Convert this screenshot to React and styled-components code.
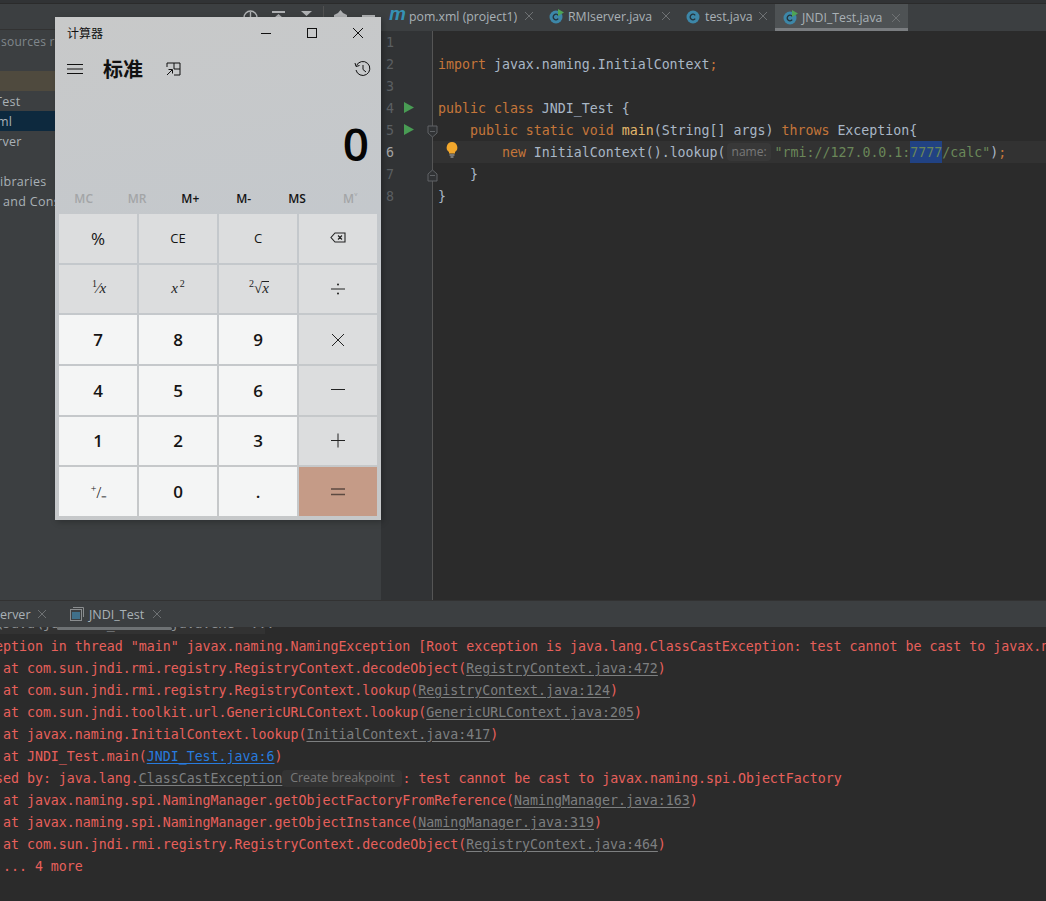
import React from 'react';
import styled, { createGlobalStyle } from "styled-components";

const GlobalStyle = createGlobalStyle`
    html, body {
        margin: 0;
        padding: 0;
        background: #2b2b2b;
    }
`

const UI = `"Open Sans", "Noto Sans", sans-serif`
const MONO = `"DejaVu Sans Mono", "Liberation Mono", monospace`
const CJK = `"Noto Sans CJK SC", "Noto Sans", sans-serif`

const Page = styled.div`
    position: relative;
    width: 1046px;
    height: 901px;
    overflow: hidden;
    display: flex;
    flex-direction: column;
    background: #2b2b2b;
`

const TopStrip = styled.div`
    height: 3px;
    flex: none;
    background: #313335;
    border-bottom: 1px solid #2b2b2b;
`

const Upper = styled.div`
    height: 596px;
    flex: none;
    display: flex;
`

/* project tree */
const Sidebar = styled.div`
    width: 381px;
    flex: none;
    background: #3c3f41;
`

const SidebarBar = styled.div`
    height: 26px;
    display: flex;
    align-items: center;
    justify-content: flex-end;
    gap: 13px;
    padding-right: 5px;
    border-bottom: 1px solid #323232;
    box-sizing: border-box;
`

const BarIcon = styled.svg`
    width: 15px;
    height: 15px;
    flex: none;
    margin-top: 2px;
    color: #afb1b3;
`

const BarDivider = styled.div`
    width: 1px;
    height: 22px;
    margin: 0 -4px;
    background: #515151;
`

const TreeHint = styled.div`
    height: 22px;
    padding-top: 1px;
    margin-left: 1px;
    margin-bottom: 18px;
    font: 12px/22px ${UI};
    letter-spacing: 0.25px;
    color: #80878c;
    white-space: nowrap;
`

const TreeRow = styled.div`
    height: 20px;
    line-height: 22px;
    font-family: ${UI};
    font-size: 12.5px;
    letter-spacing: 0.3px;
    white-space: nowrap;
    color: #a9b1b6;
    text-indent: ${props => props.$indent || 0}px;
    overflow: hidden;
    background: ${props =>
        props.$tone === "selected" ? "#0d293e" :
        props.$tone === "match" ? "#4f4a3e" : "transparent"};
`

/* editor */
const Editor = styled.div`
    flex: 1;
    min-width: 0;
    display: flex;
    flex-direction: column;
`

const TabBar = styled.div`
    height: 27px;
    flex: none;
    display: flex;
    background: #3c3f41;
`

const Tab = styled.div`
    display: flex;
    align-items: center;
    width: ${props => props.$width}px;
    height: 27px;
    padding: 0 7px 0 8px;
    box-sizing: border-box;
    font: 12.3px ${UI};
    color: #a9b1b6;
    white-space: nowrap;
    background: ${props => props.$active ? "#4e5254" : "transparent"};
    border-bottom: 3px solid ${props => props.$active ? "#7a7d80" : "transparent"};
    padding-top: ${props => props.$active ? "3px" : "0"};
`

const TabLabel = styled.span`
    margin-left: 4px;
`

const TabClose = styled.svg`
    width: 10px;
    height: 10px;
    margin-left: auto;
    color: #6e7173;
`

const MavenMark = styled.span`
    width: 16px;
    font: italic 700 19px/20px "Liberation Sans", sans-serif;
    color: #3592b5;
    margin-top: -5px;
    letter-spacing: -1px;
`

const CodeArea = styled.div`
    flex: 1;
    display: flex;
    min-height: 0;
`

const Gutter = styled.div`
    width: 51px;
    flex: none;
    background: #313335;
    border-right: 1px solid #555555;
`

const GutterRow = styled.div`
    position: relative;
    height: 22px;
    display: flex;
    align-items: center;
    padding-left: 5px;
    font: 13.3px ${MONO};
    color: ${props => props.$current ? "#a4a3a3" : "#5b5f62"};
`

const LineNo = styled.span`
    width: 18px;
`

const RunIcon = styled.svg`
    width: 10px;
    height: 11px;
    margin-top: -1px;
`

const FoldIcon = styled.svg`
    position: absolute;
    right: -7px;
    top: 6px;
    width: 13px;
    height: 13px;
`

const Code = styled.div`
    flex: 1;
    min-width: 0;
    font: 13.28px/24px ${MONO};
    color: #a9b7c6;
`

const CodeLine = styled.div`
    position: relative;
    height: 22px;
    padding-left: 5px;
    white-space: pre;
    background: ${props => props.$current ? "#323232" : "transparent"};
`

const Bulb = styled.svg`
    position: absolute;
    left: 12px;
    top: 0;
    width: 14px;
    height: 18px;
`

const Kw = styled.span`
    color: #c5763a;
`

const Fn = styled.span`
    color: #e3b76c;
`

const Str = styled.span`
    color: #6a8759;
`

const Selected = styled.span`
    display: inline-block;
    height: 22px;
    background: #214283;
    vertical-align: top;
`

const ParamHint = styled.span`
    display: inline-block;
    width: 44px;
    height: 18px;
    margin: 2px 4px 0 1px;
    padding-left: 5px;
    box-sizing: border-box;
    border-radius: 4px;
    background: #383838;
    color: #787878;
    font: 12px/18px ${UI};
    vertical-align: top;
    overflow: hidden;
`

/* run panel */
const Panel = styled.div`
    flex: 1;
    min-height: 0;
    display: flex;
    flex-direction: column;
    border-top: 1px solid #323232;
`

const PanelTabs = styled.div`
    height: 26px;
    flex: none;
    display: flex;
    align-items: center;
    background: #3c3f41;
    font: 12.5px ${UI};
    color: #a9b1b6;
    white-space: nowrap;
`

const PanelTab = styled.div`
    position: relative;
    display: flex;
    align-items: center;
    height: 26px;
    width: ${props => props.$width}px;
    padding-left: ${props => props.$pad}px;
    padding-right: 10px;
    box-sizing: border-box;
`

const PanelUnderline = styled.div`
    position: absolute;
    left: 0;
    right: 0;
    bottom: -3px;
    height: 3px;
    border-radius: 2px;
    background: #6e7274;
    z-index: 2;
`

const ConsoleIcon = styled.svg`
    width: 14px;
    height: 14px;
    margin-right: 5px;
`

const Console = styled.div`
    flex: 1;
    min-height: 0;
    overflow: hidden;
    font: 13.28px/24px ${MONO};
    color: #e8605b;
`

const ConsoleLine = styled.div`
    height: 22px;
    margin-left: -29px;
    white-space: pre;
`

const ClippedLine = styled(ConsoleLine)`
    margin-top: -15px;
    margin-bottom: 1px;
    width: 294px;
    color: #8d9194;
    background: #323232;
`

const Ref = styled.span`
    color: ${props => props.$own ? "#287bde" : "#7d7f80"};
    text-decoration: underline;
    text-underline-offset: 2px;
`

const BreakpointHint = styled.span`
    display: inline-block;
    width: 120px;
    height: 17px;
    margin-top: 3px;
    text-align: center;
    border-radius: 4px;
    background: #333333;
    color: #787878;
    font: 12.4px/16px ${UI};
    vertical-align: top;
`

/* calculator window */
const CalcWindow = styled.div`
    position: absolute;
    left: 55px;
    top: 17px;
    width: 326px;
    height: 503px;
    display: flex;
    flex-direction: column;
    background: linear-gradient(170deg, #c8c9c9 0%, #c4c8cc 45%, #c6c8c9 100%);
    box-shadow: 2px 2px 6px rgba(0, 0, 0, 0.25);
    color: #000;
`

const CalcTitleBar = styled.div`
    height: 32px;
    flex: none;
    display: flex;
    align-items: center;
    padding-left: 12px;
    font: 12px ${CJK};
    color: #111;
`

const CalcTitle = styled.span`
    flex: 1;
    margin-top: -2px;
`

const WinButton = styled.svg`
    width: 46px;
    height: 12px;
    flex: none;
`

const CalcHeader = styled.div`
    height: 40px;
    flex: none;
    display: flex;
    align-items: center;
    padding: 0 10px 0 12px;
`

const ModeTitle = styled.span`
    margin: -2px 0 0 20px;
    font: 700 20px ${CJK};
    color: #111;
`

const HeaderIcon = styled.svg`
    flex: none;
    margin-left: ${props => props.$gap || 0}px;
`

const HeaderSpacer = styled.div`
    flex: 1;
`

const CalcDisplay = styled.div`
    height: 96px;
    flex: none;
    padding-right: 12px;
    text-align: right;
    font: 600 46px/108px "Open Sans", sans-serif;
    color: #050505;
`

const MemoryRow = styled.div`
    height: 26px;
    flex: none;
    display: grid;
    grid-template-columns: repeat(6, 1fr);
    align-items: center;
    padding: 0 4px 0 2px;
`

const MemoryKey = styled.div`
    text-align: center;
    font: 600 12px ${UI};
    color: ${props => props.$off ? "#a3a5a7" : "#141414"};
`

const Keypad = styled.div`
    flex: 1;
    min-height: 0;
    display: grid;
    grid-template-columns: repeat(4, 1fr);
    grid-template-rows: repeat(6, 1fr);
    gap: 2px;
    padding: 3px 4px 4px;
`

const Key = styled.div`
    display: flex;
    align-items: center;
    justify-content: center;
    background: ${props =>
        props.$kind === "num" ? "#f4f5f5" :
        props.$kind === "equals" ? "#c59b87" : "#dcddde"};
    color: #141414;
    font: ${props =>
        props.$kind === "num" ? "600 17px" :
        props.$big ? "400 17px" : "400 13px"} ${UI};
`

const MathLabel = styled.span`
    font: italic 400 15px "Liberation Serif", serif;
    color: #222;
    white-space: nowrap;
`

const PlainLabel = styled(MathLabel)`
    font-style: normal;
    font-size: 17px;
`

const Sup = styled.sup`
    font-size: 10px;
    font-style: normal;
    line-height: 0;
    margin-left: 2px;
`

const Radicand = styled.span`
    border-top: 1px solid #222;
    line-height: 12px;
    display: inline-block;
`

const KeyIcon = styled.svg`
    width: 16px;
    height: 16px;
`

const Close = () => (
    <TabClose viewBox="0 0 10 10">
        <path d="M1 1 L9 9 M9 1 L1 9" stroke="currentColor" strokeWidth="1" fill="none" />
    </TabClose>
)

const ClassIcon = ({ run }) => (
    <svg width="15" height="15" viewBox="0 0 15 15" style={{ flex: "none" }}>
        <circle cx="7" cy="8" r="6.5" fill="#3d87a8" />
        <path d="M9.2 6.3 A2.8 2.8 0 1 0 9.2 9.7" stroke="#23333b" strokeWidth="1.3" fill="none" />
        {run && <path d="M9 0 L15 3.5 L9 7 Z" fill="#4fa457" />}
    </svg>
)

const ToolIcons = () => (
    <>
        <BarIcon viewBox="0 0 15 15" fill="none">
            <circle cx="7.5" cy="7.5" r="6.5" stroke="currentColor" strokeWidth="1.4" />
            <path d="M7.5 2 V8" stroke="currentColor" strokeWidth="1.4" />
        </BarIcon>
        <BarIcon viewBox="0 0 15 15">
            <path d="M1 1 H14 V3 H1 Z M7.5 4 L12 8 H3 Z" fill="currentColor" />
        </BarIcon>
        <BarIcon viewBox="0 0 15 15">
            <path d="M2 1 H13 L7.5 6 Z M2 8 H13 V10 H2 Z" fill="currentColor" />
        </BarIcon>
        <BarDivider />
        <BarIcon viewBox="0 0 15 15">
            <path d="M5 3 L7.5 0 L10 3 L14 5 V10 H1 V5 Z" fill="currentColor" />
        </BarIcon>
        <BarIcon viewBox="0 0 15 15">
            <path d="M1 5 H14 V7 H1 Z" fill="currentColor" />
        </BarIcon>
    </>
)

const Run = () => (
    <RunIcon viewBox="0 0 10 11">
        <path d="M0 0 L10 5.5 L0 11 Z" fill="#499c54" />
    </RunIcon>
)

const Fold = ({ up }) => (
    <FoldIcon viewBox="0 0 13 13" fill="#313335" stroke="#606366">
        <path d={up ? "M2 12 V5 L6.5 1 L11 5 V12 Z" : "M2 1 V8 L6.5 12 L11 8 V1 Z"} />
        <path d="M4 6.5 H9" />
    </FoldIcon>
)

const gutterRows = [
    { n: 1 },
    { n: 2 },
    { n: 3 },
    { n: 4, run: true },
    { n: 5, run: true, fold: "down" },
    { n: 6, current: true },
    { n: 7, fold: "up" },
    { n: 8 },
]

const tabs = [
    { name: "RMIserver.java", run: true, width: 137 },
    { name: "test.java", width: 97 },
    { name: "JNDI_Test.java", run: true, active: true, width: 133 },
]

const memoryKeys = [
    { label: "MC", off: true },
    { label: "MR", off: true },
    { label: "M+" },
    { label: "M-" },
    { label: "MS" },
    { label: "M˅", off: true },
]

const Stroke = ({ d }) => (
    <KeyIcon viewBox="0 0 16 16" fill="none" stroke="#222" strokeWidth="1">
        <path d={d} />
    </KeyIcon>
)

const keys = [
    { label: "%", kind: "fn", big: true },
    { label: "CE", kind: "fn" },
    { label: "C", kind: "fn" },
    {
        kind: "fn",
        node: (
            <KeyIcon viewBox="0 0 16 16" fill="none" stroke="#222" strokeWidth="1.1">
                <path d="M5 3 H15 V12 H5 L1 7.5 Z M8 5.5 L12 9.5 M12 5.5 L8 9.5" />
            </KeyIcon>
        ),
    },
    { kind: "fn", node: <MathLabel><Sup>1</Sup>⁄x</MathLabel> },
    { kind: "fn", node: <MathLabel>x<Sup>2</Sup></MathLabel> },
    { kind: "fn", node: <MathLabel><Sup>2</Sup>√<Radicand>x</Radicand></MathLabel> },
    {
        kind: "fn",
        node: (
            <KeyIcon viewBox="0 0 16 16" fill="#222" stroke="none">
                <path d="M1 7.5 H15 V8.5 H1 Z" />
                <circle cx="8" cy="3.5" r="1" />
                <circle cx="8" cy="12.5" r="1" />
            </KeyIcon>
        ),
    },
    { label: "7", kind: "num" },
    { label: "8", kind: "num" },
    { label: "9", kind: "num" },
    { kind: "fn", node: <Stroke d="M2 2 L14 14 M14 2 L2 14" /> },
    { label: "4", kind: "num" },
    { label: "5", kind: "num" },
    { label: "6", kind: "num" },
    { kind: "fn", node: <Stroke d="M1 7.5 H15" /> },
    { label: "1", kind: "num" },
    { label: "2", kind: "num" },
    { label: "3", kind: "num" },
    { kind: "fn", node: <Stroke d="M1 7.5 H15 M8 .5 V14.5" /> },
    { kind: "num", node: <PlainLabel><Sup>+</Sup>/₋</PlainLabel> },
    { label: "0", kind: "num" },
    { label: ".", kind: "num" },
    {
        kind: "equals",
        node: (
            <KeyIcon viewBox="0 0 16 16" fill="none" stroke="#5c4a41" strokeWidth="1.4">
                <path d="M1 5 H15 M1 10.5 H15" />
            </KeyIcon>
        ),
    },
]

const Calculator = () => (
    <CalcWindow>
        <CalcTitleBar>
            <CalcTitle>计算器</CalcTitle>
            <WinButton viewBox="0 0 46 12" stroke="#111" fill="none">
                <path d="M18 6.5 H28" />
            </WinButton>
            <WinButton viewBox="0 0 46 12" stroke="#111" fill="none">
                <rect x="18.5" y="1.5" width="9" height="9" />
            </WinButton>
            <WinButton viewBox="0 0 46 12" stroke="#111" fill="none">
                <path d="M18 1 L28 11 M28 1 L18 11" />
            </WinButton>
        </CalcTitleBar>
        <CalcHeader>
            <HeaderIcon width="16" height="10" viewBox="0 0 16 10" stroke="#111">
                <path d="M0 .5 H16 M0 5 H16 M0 9.5 H16" />
            </HeaderIcon>
            <ModeTitle>标准</ModeTitle>
            <HeaderIcon $gap={23} width="15" height="14" viewBox="0 0 15 14" stroke="#111" fill="none">
                <path d="M1 5 V1 H14 V13 H8 M8 1 V7 H14 M1 13 L6 8 M2.5 7.5 H6.5 V11.5" />
            </HeaderIcon>
            <HeaderSpacer />
            <HeaderIcon width="17" height="16" viewBox="0 0 17 16" stroke="#111" fill="none">
                <path d="M2.5 4.5 A7 7 0 1 1 2 9" />
                <path d="M1 2 L2 5.5 L5.5 4.5" />
                <path d="M9 4 V8.5 L12 11" />
            </HeaderIcon>
        </CalcHeader>
        <CalcDisplay>0</CalcDisplay>
        <MemoryRow>
            {memoryKeys.map(k => (
                <MemoryKey key={k.label} $off={k.off}>{k.label}</MemoryKey>
            ))}
        </MemoryRow>
        <Keypad>
            {keys.map((k, i) => (
                <Key key={i} $kind={k.kind} $big={k.big}>{k.node || k.label}</Key>
            ))}
        </Keypad>
    </CalcWindow>
)

const App = () => {
    return (
        <Page>
            <GlobalStyle />
            <TopStrip />
            <Upper>
                <Sidebar>
                    <SidebarBar>
                        <ToolIcons />
                    </SidebarBar>
                    <TreeHint>sources r</TreeHint>
                    <TreeRow $tone="match" />
                    <TreeRow $indent={-5}>Test</TreeRow>
                    <TreeRow $tone="selected" $indent={-3}>ml</TreeRow>
                    <TreeRow $indent={-3}>rver</TreeRow>
                    <TreeRow />
                    <TreeRow>ibraries</TreeRow>
                    <TreeRow $indent={3}>and Cons</TreeRow>
                </Sidebar>
                <Editor>
                    <TabBar>
                        <Tab $width={160}>
                            <MavenMark>m</MavenMark>
                            <TabLabel>pom.xml (project1)</TabLabel>
                            <Close />
                        </Tab>
                        {tabs.map(t => (
                            <Tab key={t.name} $active={t.active} $width={t.width}>
                                <ClassIcon run={t.run} />
                                <TabLabel>{t.name}</TabLabel>
                                <Close />
                            </Tab>
                        ))}
                    </TabBar>
                    <CodeArea>
                        <Gutter>
                            {gutterRows.map(r => (
                                <GutterRow key={r.n} $current={r.current}>
                                    <LineNo>{r.n}</LineNo>
                                    {r.run && <Run />}
                                    {r.fold && <Fold up={r.fold === "up"} />}
                                </GutterRow>
                            ))}
                        </Gutter>
                        <Code>
                            <CodeLine />
                            <CodeLine><Kw>import</Kw> javax.naming.InitialContext<Kw>;</Kw></CodeLine>
                            <CodeLine />
                            <CodeLine><Kw>public class</Kw> JNDI_Test {"{"}</CodeLine>
                            <CodeLine>{"    "}<Kw>public static void</Kw> <Fn>main</Fn>(String[] args) <Kw>throws</Kw> Exception{"{"}</CodeLine>
                            <CodeLine $current>
                                <Bulb viewBox="0 0 14 18">
                                    <path d="M7 1 A5.5 5.5 0 0 1 10 11 V12.5 H4 V11 A5.5 5.5 0 0 1 7 1 Z" fill="#f2a72c" />
                                    <path d="M4.5 14 H9.5 M5.5 16 H8.5" stroke="#b9b9b9" strokeWidth="1" />
                                </Bulb>
                                {"        "}<Kw>new</Kw> InitialContext().lookup(<ParamHint>name:</ParamHint><Str>"rmi://127.0.0.1:<Selected>7777</Selected>/calc"</Str>)<Kw>;</Kw>
                            </CodeLine>
                            <CodeLine>{"    }"}</CodeLine>
                            <CodeLine>{"}"}</CodeLine>
                        </Code>
                    </CodeArea>
                </Editor>
            </Upper>
            <Panel>
                <PanelTabs>
                    <PanelTab $width={57} $pad={0}>
                        <span>erver</span>
                        <Close />
                    </PanelTab>
                    <PanelTab $width={115} $pad={13}>
                        <ConsoleIcon viewBox="0 0 14 14" fill="none">
                            <path d="M3 0.5 H13.5 V10" stroke="#8a8d8f" />
                            <rect x="0.5" y="2.5" width="11" height="11" stroke="#8a8d8f" />
                            <rect x="2" y="5" width="8" height="7" fill="#40708a" />
                        </ConsoleIcon>
                        <span>JNDI_Test</span>
                        <Close />
                        <PanelUnderline />
                    </PanelTab>
                </PanelTabs>
                <Console>
                    <ClippedLine>{`"C:\\Java\\jdk1.8.0_65\\bin\\java.exe" ...`}</ClippedLine>
                    <ConsoleLine>{`Exception in thread "main" javax.naming.NamingException [Root exception is java.lang.ClassCastException: test cannot be cast to javax.naming.spi.ObjectFactory]`}</ConsoleLine>
                    <ConsoleLine>{"    at com.sun.jndi.rmi.registry.RegistryContext.decodeObject("}<Ref>RegistryContext.java:472</Ref>)</ConsoleLine>
                    <ConsoleLine>{"    at com.sun.jndi.rmi.registry.RegistryContext.lookup("}<Ref>RegistryContext.java:124</Ref>)</ConsoleLine>
                    <ConsoleLine>{"    at com.sun.jndi.toolkit.url.GenericURLContext.lookup("}<Ref>GenericURLContext.java:205</Ref>)</ConsoleLine>
                    <ConsoleLine>{"    at javax.naming.InitialContext.lookup("}<Ref>InitialContext.java:417</Ref>)</ConsoleLine>
                    <ConsoleLine>{"    at JNDI_Test.main("}<Ref $own>JNDI_Test.java:6</Ref>)</ConsoleLine>
                    <ConsoleLine>{"Caused by: java.lang."}<Ref>ClassCastException</Ref><BreakpointHint>Create breakpoint</BreakpointHint>{": test cannot be cast to javax.naming.spi.ObjectFactory"}</ConsoleLine>
                    <ConsoleLine>{"    at javax.naming.spi.NamingManager.getObjectFactoryFromReference("}<Ref>NamingManager.java:163</Ref>)</ConsoleLine>
                    <ConsoleLine>{"    at javax.naming.spi.NamingManager.getObjectInstance("}<Ref>NamingManager.java:319</Ref>)</ConsoleLine>
                    <ConsoleLine>{"    at com.sun.jndi.rmi.registry.RegistryContext.decodeObject("}<Ref>RegistryContext.java:464</Ref>)</ConsoleLine>
                    <ConsoleLine>{"    ... 4 more"}</ConsoleLine>
                </Console>
            </Panel>
            <Calculator />
        </Page>
    )
}

export default App;
